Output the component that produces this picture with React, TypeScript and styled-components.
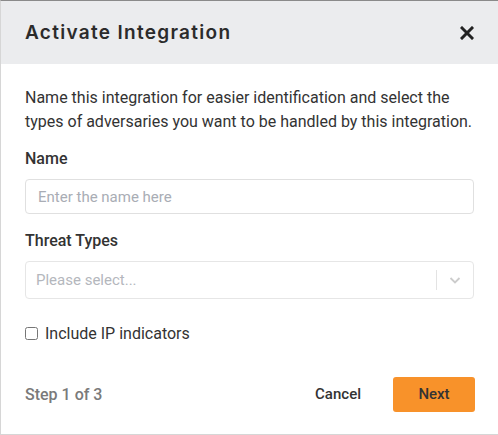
import styled, { createGlobalStyle } from "styled-components";

const GlobalStyle = createGlobalStyle`
  html, body {
    margin: 0;
    padding: 0;
    background: #ffffff;
  }
  * {
    box-sizing: border-box;
  }
`;

const App = () => {
  return (
    <>
      <GlobalStyle />
      <Modal>
        <Header>
          <Title>Activate Integration</Title>
          <CloseButton aria-label="Close">
            <svg width="14" height="14" viewBox="0 0 14 14">
              <path
                d="M2 2 L12 12 M12 2 L2 12"
                stroke="#222"
                strokeWidth="3"
                strokeLinecap="square"
              />
            </svg>
          </CloseButton>
        </Header>
        <Body>
          <Intro>
            Name this integration for easier identification and select the
            types of adversaries you want to be handled by this integration.
          </Intro>
          <Field>
            <Label>Name</Label>
            <TextInput type="text" placeholder="Enter the name here" />
          </Field>
          <Field>
            <Label>Threat Types</Label>
            <SelectBox>
              <SelectPlaceholder>Please select...</SelectPlaceholder>
              <Separator />
              <Chevron>
                <svg width="14" height="14" viewBox="0 0 14 14">
                  <path
                    d="M2.5 5 L7 9.5 L11.5 5"
                    fill="none"
                    stroke="#cccccc"
                    strokeWidth="1.8"
                  />
                </svg>
              </Chevron>
            </SelectBox>
          </Field>
          <CheckRow>
            <CheckBox type="checkbox" id="ipIndicators" />
            <CheckLabel htmlFor="ipIndicators">Include IP indicators</CheckLabel>
          </CheckRow>
        </Body>
        <Footer>
          <StepText>Step 1 of 3</StepText>
          <Actions>
            <CancelButton>Cancel</CancelButton>
            <NextButton>Next</NextButton>
          </Actions>
        </Footer>
      </Modal>
    </>
  );
};
export default App;

// styles
const Modal = styled.div`
  width: 498px;
  height: 435px;
  border-top: 1px solid #8a8a8a;
  border-left: 1px solid #d6d6d6;
  border-bottom: 1px solid #d6d6d6;
  background: #fff;
  display: flex;
  flex-direction: column;
  font-family: Roboto, "Liberation Sans", sans-serif;
  color: #333;

  & > * {
    flex-shrink: 0;
  }
`;

const Header = styled.div`
  height: 63px;
  background: #ebecee;
  display: flex;
  align-items: center;
  justify-content: space-between;
  padding: 0 24px 0 24px;
`;

const Title = styled.h2`
  margin: 0;
  font-family: Inter, "Liberation Sans", sans-serif;
  font-size: 19px;
  font-weight: 600;
  color: #2b2b2b;
  letter-spacing: 1.3px;
`;

const CloseButton = styled.button`
  border: none;
  background: none;
  padding: 0;
  display: flex;
  align-items: center;
  cursor: pointer;
`;

const Body = styled.div`
  padding: 22px 24px 0 24px;
  display: flex;
  flex-direction: column;
`;

const Intro = styled.p`
  margin: 0 0 14px 0;
  font-size: 16px;
  line-height: 24px;
  color: #333;
`;

const Field = styled.div`
  display: flex;
  flex-direction: column;
  margin-bottom: 16px;
`;

const Label = styled.label`
  font-size: 16px;
  font-weight: 500;
  line-height: 22px;
  margin-bottom: 9px;
  color: #333;
`;

const TextInput = styled.input`
  height: 35px;
  width: 100%;
  border: 1px solid #e0e0e0;
  border-radius: 4px;
  padding: 0 12px;
  font-family: Roboto, "Liberation Sans", sans-serif;
  font-size: 15px;
  color: #333;

  &::placeholder {
    color: #a9adb5;
  }

  &:focus {
    outline: none;
    border-color: #bbb;
  }
`;

const SelectBox = styled.div`
  height: 38px;
  border: 1px solid #e6e6e6;
  border-radius: 4px;
  display: flex;
  align-items: center;
  padding-left: 10px;
`;

const SelectPlaceholder = styled.span`
  flex: 1;
  font-size: 15px;
  color: #b4b7bd;
`;

const Separator = styled.span`
  width: 1px;
  height: 20px;
  background: #e3e3e3;
`;

const Chevron = styled.span`
  width: 36px;
  display: flex;
  align-items: center;
  justify-content: center;
`;

const CheckRow = styled.div`
  display: flex;
  align-items: center;
  gap: 7px;
  margin-top: 9px;
`;

const CheckBox = styled.input`
  width: 13px;
  height: 13px;
  margin: 0;
`;

const CheckLabel = styled.label`
  font-size: 16px;
  line-height: 19px;
  color: #333;
`;

const Footer = styled.div`
  margin-top: auto;
  height: 84px;
  display: flex;
  align-items: center;
  justify-content: space-between;
  padding: 4px 23px 0 24px;
`;

const StepText = styled.span`
  font-size: 16px;
  font-weight: 500;
  color: #7a7a7a;
`;

const Actions = styled.div`
  display: flex;
  align-items: center;
  gap: 14px;
`;

const CancelButton = styled.button`
  border: none;
  background: none;
  font-family: Roboto, "Liberation Sans", sans-serif;
  font-size: 15px;
  font-weight: 500;
  color: #333;
  padding: 0 18px;
  height: 34px;
  cursor: pointer;
`;

const NextButton = styled.button`
  width: 82px;
  height: 35px;
  border: none;
  border-radius: 3px;
  background: #f8922a;
  font-family: Roboto, "Liberation Sans", sans-serif;
  font-size: 15px;
  font-weight: 500;
  color: #333;
  cursor: pointer;
`;
